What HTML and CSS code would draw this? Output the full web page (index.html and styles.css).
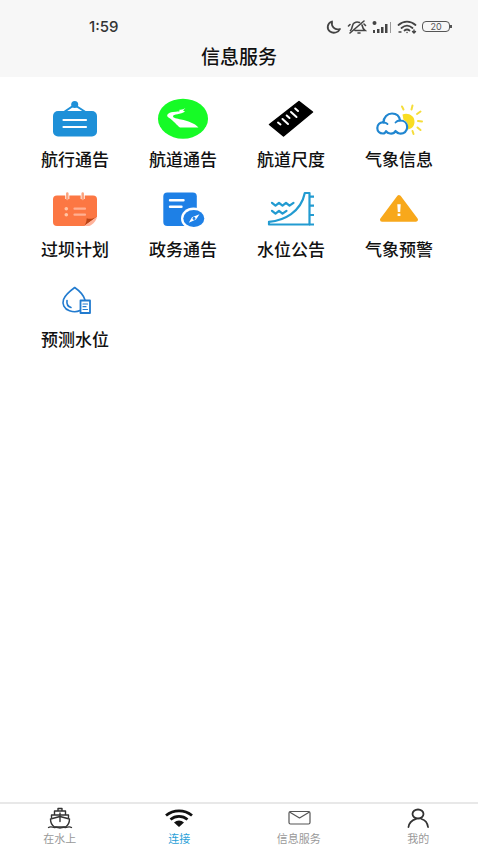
FILE: index.html
```html
<!DOCTYPE html>
<html lang="zh-CN">
<head>
<meta charset="utf-8">
<meta name="viewport" content="width=device-width, initial-scale=1">
<title>信息服务</title>
<link rel="stylesheet" href="styles.css">
</head>
<body>
<header class="header">
  <div class="status">
    <span class="time">1:59</span>
    <div class="status-icons">
      <svg width="16" height="16" viewBox="0 0 16 16" fill="none" stroke="#444" stroke-width="1.8" stroke-linejoin="round"><path d="M6 2.5C1 4 .5 10 4 12.500C7.500 15 12.500 13.500 14 10C8.500 11.500 5 7.500 6 2.500Z"/></svg>
      <svg width="20" height="16" viewBox="0 0 20 16" fill="none" stroke="#444" stroke-width="1.600" stroke-linecap="round"><path d="M3.500 11.500C6 9.500 4.500 5 7.500 3.800C9 2.800 11 2.800 12.500 3.500M15 6C15.500 8.500 16 10 18 11.500H8M11 14H13M17 2L3 14M1.500 7L3 5.500M17 5L18.500 6.500"/></svg>
      <svg width="20" height="16" viewBox="0 0 20 16" fill="#444"><circle cx="2.500" cy="4" r="2"/><path d="M1 11h2v3H1zM5 10h2.500v4H5zM9 8h2.500v6H9zM13 5h2.500v9h-2.500z"/><path d="M18 3h1v11h-1z" fill="#999"/></svg>
      <svg width="20" height="16" viewBox="0 0 20 16" fill="none" stroke="#444" stroke-width="1.800" stroke-linecap="round"><path d="M1.500 6C6.500 1.500 13.500 1.500 18.500 6M4.500 9C8 6 12 6 15.500 9M7.500 11.500C9 10.300 11 10.300 12.500 11.500"/><path d="M10 13.500h.1M2 13h2M17 11v3M15.500 12.500L17 14L18.500 12.500" stroke-width="1.400"/></svg>
      <span class="battery">20</span>
    </div>
  </div>
  <h1 class="title">信息服务</h1>
</header>

<main class="services">
  <a class="service" href="#">
    <svg class="service-icon" viewBox="0 0 66 44"><path d="M22 15L32.500 8L43.500 15" fill="none" stroke="#1e90d8" stroke-width="2"/><circle cx="32.700" cy="7.500" r="3.500" fill="#1e90d8"/><rect x="11" y="14" width="44" height="25.500" rx="5" fill="#1e90d8"/><path d="M21.500 23H44M21.500 30H44" stroke="#fff" stroke-width="2.200" stroke-linecap="round"/></svg>
    <span class="service-name">航行通告</span>
  </a>
  <a class="service" href="#">
    <svg class="service-icon" viewBox="0 0 66 44"><ellipse cx="33" cy="21.700" rx="25" ry="20" fill="#16fb26"/><path d="M35.500 11L33 13.500L35 14.500C31 17.500 23 17 23 19.200C23 21 27 21.500 31 22.500C38 24 44.500 26 48.500 30.500H30C27 28.500 24 24 18.500 20.500C15.500 18.500 18 15.500 23 15C27 14.500 29 15 30 13.800L28.500 13C31 12.500 33 12.500 35.500 11Z" fill="#fff"/></svg>
    <span class="service-name">航道通告</span>
  </a>
  <a class="service" href="#">
    <svg class="service-icon" viewBox="0 0 66 44"><path d="M41 4.500L54.500 15L25.500 39L11.500 27.500Z" fill="#000" stroke="#000" stroke-width="1.500" stroke-linejoin="round"/><path d="M20 25.500L22.500 27.500M24.500 22L30 27M28.700 18.500L31.500 21M33 15L38.500 20M37.200 11.500L40 14" stroke="#fff" stroke-width="2" stroke-linecap="round"/></svg>
    <span class="service-name">航道尺度</span>
  </a>
  <a class="service" href="#">
    <svg class="service-icon" viewBox="0 0 66 44"><path d="M36.500 17.500C41 15 49 18 48.500 25C48.300 30 45 32 41.500 32.500C43 28 41 24 37.500 23Z" fill="#f9dd22"/><path d="M36 9.500L37.500 12.500M46.500 8.500L45.500 12.500M54.500 14.500L51 17M56 24.500L52 24M54.500 33L51.500 30.500M47.500 37L46.500 34" stroke="#f5dd3b" stroke-width="2" stroke-linecap="round"/><path d="M17 36.500C13.500 36.500 11.300 34 11.300 31C11.300 27.500 14 25 17.500 25.500C17.500 20 21.500 16.500 26 16.500C31 16.500 33.500 19.500 34 23.500C38.500 23.500 41.200 26.500 41.200 30C41.200 34.500 38 37 33.500 36.500C31.500 36.300 30.500 35 29.500 34C28.500 36 26.500 36.800 24 36.500C22 36.300 20.800 35.500 20 34.200C19.500 35.800 18.500 36.500 17 36.500Z" fill="#fff" stroke="#2086d0" stroke-width="2.200" stroke-linejoin="round"/><path d="M17.500 25.500C19 25.500 20.500 26 21.500 27M34 23.500C32 23.500 30.500 24.300 29.500 25.500" fill="none" stroke="#2086d0" stroke-width="1.800" stroke-linecap="round"/></svg>
    <span class="service-name">气象信息</span>
  </a>
  <a class="service" href="#">
    <svg class="service-icon" viewBox="0 0 66 44"><rect x="11" y="8.500" width="44" height="30.500" rx="4" fill="#fc7743"/><path d="M25.300 6.500V12M40.700 6.500V12" stroke="#fff" stroke-width="4"/><path d="M25.300 6.500V12M40.700 6.500V12" stroke="#fca27d" stroke-width="2.500" stroke-linecap="round"/><path d="M32.500 21.700H43M32.500 27.700H43" stroke="#ffb092" stroke-width="2.200" stroke-linecap="round"/><circle cx="24.300" cy="21.700" r="1.800" fill="#ffc4a5"/><circle cx="24.300" cy="27.700" r="1.800" fill="#ffc4a5"/><path d="M42 39.500L55.500 29.500V39.500Z" fill="#fff"/><path d="M42 39C43.500 38 44.500 35 44.700 31.300C48.500 32.500 52 31.500 55 29.700Z" fill="#b94416"/><path d="M42 39L55 29.700C54.500 33.500 51 37.500 47 39Z" fill="#ffb29a"/></svg>
    <span class="service-name">过坝计划</span>
  </a>
  <a class="service" href="#">
    <svg class="service-icon" viewBox="0 0 66 44"><rect x="13.300" y="5.500" width="33.500" height="33.500" rx="4" fill="#1e80e6"/><path d="M20 13.300H33.500M20 19.700H31.500" stroke="#fff" stroke-width="2.400" stroke-linecap="round"/><ellipse cx="43.500" cy="31.500" rx="12.500" ry="11" fill="#fff"/><ellipse cx="43.800" cy="31.500" rx="10.500" ry="8.500" fill="#1e80e6"/><path d="M49.500 27.200L46 32.600L38.800 35.800L42 30.300Z" fill="#fff"/><circle cx="44" cy="31.500" r="1.400" fill="#1e80e6"/></svg>
    <span class="service-name">政务通告</span>
  </a>
  <a class="service" href="#">
    <svg class="service-icon" viewBox="0 0 66 44" fill="none" stroke="#229bd1" stroke-width="2.200" stroke-linejoin="round"><path d="M46.800 6H51.500V37.500H11V34.800C26 33.500 43 25 46.800 6Z"/><path d="M51 37.500H56M51.500 9.700H56M51.500 18.700H56M51.500 28H56"/><path d="M14 15.800L17.500 18.700L21 15.800L24.500 18.700L28 15.800L31.500 18.700L35.500 15.800M14 23.800L17.500 26.700L21 23.800L24.500 26.700L28.500 23.800" stroke-linecap="round"/></svg>
    <span class="service-name">水位公告</span>
  </a>
  <a class="service" href="#">
    <svg class="service-icon" viewBox="0 0 66 44"><path d="M33 10L50 32.700H16Z" fill="#f8a81b" stroke="#f8a81b" stroke-width="4" stroke-linejoin="round"/><path d="M31.300 17.300H34.700L34.200 25H31.800ZM31.600 26.500H34.400V29H31.600Z" fill="#fff"/></svg>
    <span class="service-name">气象预警</span>
  </a>
  <a class="service" href="#">
    <svg class="service-icon" viewBox="0 0 66 44" fill="none" stroke="#227bcf" stroke-width="1.600" stroke-linecap="round" stroke-linejoin="round"><path d="M38 33.500C35 35 31 35 27.500 33.800C22 31.800 20 27 21.500 22.500C23 18 28 14 32.700 10.500C37 13.500 41.500 17.500 43 23"/><path d="M25 23.500C24.500 27 26 29.500 29 30.500"/><path d="M38.500 23.500H48V36H38.500Z" stroke-width="1.800"/><path d="M41 27H45.500M41 29.700H44M41 32.500H45.500" stroke-width="1.200"/></svg>
    <span class="service-name">预测水位</span>
  </a>
</main>

<nav class="tabs">
  <a class="tab" href="#">
    <svg class="tab-icon" viewBox="0 0 28 24" fill="none" stroke="#333" stroke-width="1.400" stroke-linejoin="round" stroke-linecap="round"><path d="M12 5V2.500H16V5M8.500 9V5H19.500V9M5.500 11.500V9H22.500V11.500M4.500 13L14 10.500L23.500 13C23.500 16.500 22 19.500 19.500 21H8.500C6 19.500 4.500 16.500 4.500 13ZM14 7V15.500"/><path d="M2.500 21.500C5 20 6.500 21.500 8.500 21.500C11 20.500 12 22 14 22C16 22 17 20.500 19.500 21.500C21.500 21.500 23 20 25.500 21.500"/></svg>
    <span>在水上</span>
  </a>
  <a class="tab tab-active" href="#">
    <svg class="tab-icon" viewBox="0 0 28 24" fill="none" stroke="#111" stroke-width="2.800"><path d="M1 9.500C8.500 3.200 19.500 3.200 27 9.500M5.500 13.500C10.500 9.300 17.500 9.300 22.500 13.500"/><path d="M9 16.500C12 13.800 16 13.800 19 16.500L14 21Z" fill="#111" stroke="none"/></svg>
    <span>连接</span>
  </a>
  <a class="tab" href="#">
    <svg class="tab-icon" viewBox="0 0 28 24" fill="none" stroke="#555" stroke-width="1.200" stroke-linejoin="round"><rect x="4" y="5.500" width="21" height="12.500" rx="1.500"/><path d="M4.500 6L14.500 12L24.500 6"/></svg>
    <span>信息服务</span>
  </a>
  <a class="tab" href="#">
    <svg class="tab-icon" viewBox="0 0 28 24" fill="none" stroke="#333" stroke-width="1.800" stroke-linecap="round"><ellipse cx="14" cy="8" rx="5.500" ry="4.500"/><path d="M4.500 21C5 16.500 8.500 14 12 12.800M17.500 13C21 14 23.500 17 24 21"/></svg>
    <span>我的</span>
  </a>
</nav>
</body>
</html>
```
FILE: styles.css
```css
* {
  box-sizing: border-box;
}

body {
  margin: 0;
  min-height: 100vh;
  display: flex;
  flex-direction: column;
  background: #fff;
  color: #111;
  font-family: "Noto Sans CJK SC", sans-serif;
}

a {
  color: inherit;
  text-decoration: none;
}

.header {
  padding: 16px 0 7px;
  background: #f7f7f7;
}

.status {
  display: flex;
  align-items: center;
  justify-content: space-between;
  height: 21px;
  padding: 0 26px 0 89px;
}

.time {
  font: 500 15px/20px Inter, sans-serif;
  color: #333;
}

.status-icons {
  display: flex;
  align-items: center;
  gap: 5px;
}

.battery {
  position: relative;
  width: 28px;
  height: 11px;
  margin-right: 2px;
  border: 1px solid #555;
  border-radius: 4px;
  font: 9px/9px Inter, sans-serif;
  text-align: center;
  color: #555;
}

.battery::after {
  content: "";
  position: absolute;
  top: 3px;
  right: -3px;
  width: 2px;
  height: 3px;
  background: #555;
}

.title {
  margin: 5px 0 0;
  font-size: 19px;
  line-height: 28px;
  font-weight: 500;
  text-align: center;
}

.services {
  flex: 1;
  display: grid;
  grid-template-columns: repeat(4, 1fr);
  align-content: start;
  row-gap: 16px;
  padding: 20px 25px 20px 21px;
}

.service {
  display: flex;
  flex-direction: column;
  align-items: center;
  gap: 7px;
  padding-bottom: 1px;
}

.service-icon {
  width: 66px;
  height: 44px;
}

.service-name {
  font-size: 17px;
  line-height: 22px;
  font-weight: 500;
}

.tabs {
  display: grid;
  grid-template-columns: repeat(4, 1fr);
  border-top: 2px solid #e8e8e8;
  padding: 2px 0 4px;
}

.tab {
  display: flex;
  flex-direction: column;
  align-items: center;
  font-size: 11px;
  line-height: 16px;
  color: #999;
}

.tab-active {
  color: #2a9fd8;
}

.tab-icon {
  width: 28px;
  height: 24px;
}
```
